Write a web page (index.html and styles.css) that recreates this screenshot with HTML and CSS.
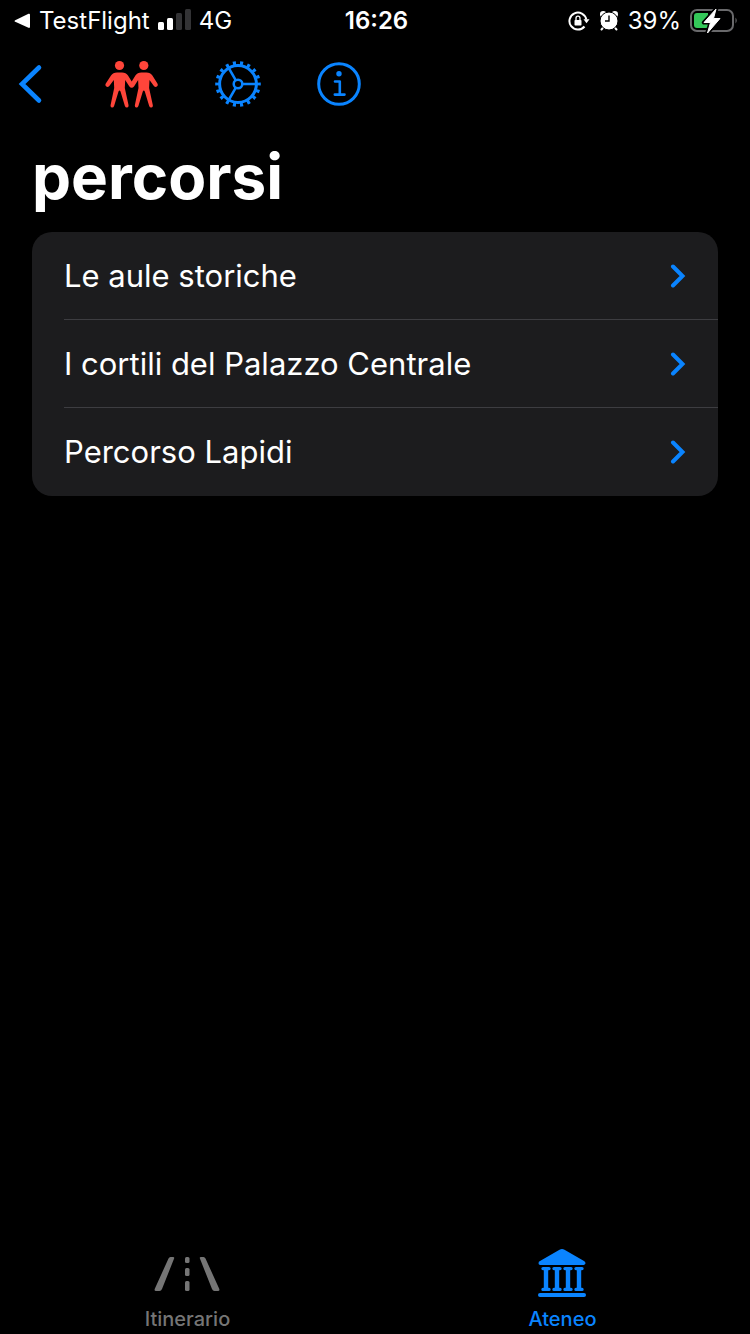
FILE: index.html
```html
<!DOCTYPE html>
<html lang="it">
<head>
<meta charset="utf-8">
<meta name="viewport" content="width=device-width, initial-scale=1">
<title>percorsi</title>
<link rel="stylesheet" href="styles.css">
</head>
<body>
<div class="app">
  <header class="status">
    <div class="status-side">
      <a class="status-back" href="#">
        <svg width="16" height="16" viewBox="0 0 16 16" fill="currentColor" aria-hidden="true"><path d="M14.500 .8Q16 .2 16 1.800V13.800Q16 15.400 14.500 14.800L1.200 8.800Q-.2 8 1.200 7.200Z"/></svg>
        <span>TestFlight</span>
      </a>
      <svg class="signal" width="33" height="22" viewBox="0 0 33 22" fill="#fff" aria-hidden="true">
        <rect x="0" y="13" width="6" height="8" rx="1.500"/><rect x="9" y="9" width="6" height="12" rx="1.500"/>
        <g fill="#333335"><rect x="18" y="4" width="6" height="17" rx="1.500"/><rect x="27" y="0" width="6" height="21" rx="1.500"/></g>
      </svg>
      <span>4G</span>
    </div>
    <time class="clock">16:26</time>
    <div class="status-side status-end">
      <svg width="22" height="20" viewBox="0 0 22 20" fill="none" stroke="#fff" stroke-width="2" aria-hidden="true">
        <path d="M18.300 8.500A8.500 8.500 0 1 0 16.500 15.500"/><path d="M15.500 8.300H21.500L18.500 12.300Z" fill="#fff" stroke="none"/>
        <rect x="6.500" y="9" width="7" height="5.500" rx=".8" fill="#fff" stroke="none"/><path d="M8 9.500V7.200a2 2 0 0 1 4 0V9.500" stroke-width="1.300"/>
      </svg>
      <svg width="20" height="22" viewBox="0 0 20 22" aria-hidden="true">
        <circle cx="4.200" cy="4.200" r="3.200" fill="#fff"/><circle cx="15.800" cy="4.200" r="3.200" fill="#fff"/>
        <path d="M4.300 17.500L2.500 19.500M15.700 17.500l1.800 2" stroke="#fff" stroke-width="2" stroke-linecap="round"/>
        <circle cx="10" cy="11" r="9" fill="#fff" stroke="#000" stroke-width="1"/>
        <path d="M10 5.500V11H6" fill="none" stroke="#000" stroke-width="1.400"/>
      </svg>
      <span>39%</span>
      <svg class="battery" width="49" height="26" viewBox="0 0 49 26" aria-hidden="true">
        <rect x="1" y="2" width="42" height="21" rx="6" fill="none" stroke="#69696b" stroke-width="2"/>
        <path d="M45.500 9.500q2.500 3 0 6Z" fill="#69696b"/>
        <path d="M7 5H18V20H7Q4 20 4 17V8Q4 5 7 5Z" fill="#34c759"/>
        <path d="M26.500 .5L13.800 14.500H20.500L17 25.500 30.500 10.500H23.500Z" fill="#000" stroke="#000" stroke-width="4" stroke-linejoin="round"/>
        <path d="M26 1L14 14.500H20.500L17.500 25 30 10.500H23.500Z" fill="#fff" stroke="#fff" stroke-width="1" stroke-linejoin="round"/>
      </svg>
    </div>
  </header>

  <nav class="toolbar" aria-label="Strumenti">
    <button type="button" aria-label="Indietro">
      <svg width="26" height="42" viewBox="0 0 26 42" fill="none" stroke="currentColor" stroke-width="4.600" stroke-linecap="round" stroke-linejoin="miter"><path d="M21 4.500L4 21 21 37.500"/></svg>
    </button>
    <button type="button" class="people" aria-label="Accompagnatori">
      <svg width="54" height="50" viewBox="0 0 54 50" fill="currentColor">
        <circle cx="14.500" cy="6.500" r="4.600"/><circle cx="38.800" cy="6.500" r="4.600"/>
        <path d="M12 13.500h5q4 0 6 3l3.700 6 3.700-6q2-3 6-3h5q4 0 6 3l5 8q1 2-.5 3t-3-.5L44.500 21l-.4 8 3.700 17q.3 2.200-1.300 2.500t-2.300-1.500L39.800 32.500q-1-2-2 0L33.400 47q-.8 1.900-2.300 1.500t-1.200-2.500L33.500 29l-.4-8-3.900 6.200q-1.200 1.500-2.500 1.500t-2.500-1.500L20.200 21l-.4 8 3.700 17q.3 2.200-1.300 2.500t-2.300-1.500L15.500 32.500q-1-2-2 0L9.100 47q-.8 1.900-2.300 1.500t-1.200-2.500L9.200 29l-.4-8-4.500 6q-1.500 1.500-3 .5t-.5-3L6 16.500q2-3 6-3Z"/>
      </svg>
    </button>
    <button type="button" class="settings" aria-label="Impostazioni">
      <svg width="46" height="46" viewBox="0 0 46 46" fill="none" stroke="currentColor" stroke-width="2.500">
        <circle cx="23" cy="23" r="18.400" stroke-width="3"/><circle cx="23" cy="23" r="4.300"/>
        <circle cx="23" cy="23" r="20.800" stroke-width="4" pathLength="18" stroke-dasharray=".42 .58" stroke-dashoffset=".21"/>
        <path d="M27.500 23H41.500M20.700 19.100L13.700 7M20.700 26.900L13.700 39"/>
      </svg>
    </button>
    <button type="button" class="info" aria-label="Informazioni">
      <svg width="44" height="44" viewBox="0 0 44 44" fill="none" stroke="currentColor" stroke-width="2.600" stroke-linecap="round" stroke-linejoin="round">
        <circle cx="22" cy="22" r="20.300" stroke-width="3"/><circle cx="22" cy="11.800" r="2.700" fill="currentColor" stroke="none"/><path d="M18 19.500H22.800V32.600M17.800 32.600H27.500"/>
      </svg>
    </button>
  </nav>

  <main class="content">
    <h1>percorsi</h1>
    <ul class="list">
      <li><a href="#"><span>Le aule storiche</span><svg class="chevron" viewBox="0 0 16 24"><path d="M3 2.500L12.500 12 3 21.500"/></svg></a></li>
      <li><a href="#"><span>I cortili del Palazzo Centrale</span><svg class="chevron" viewBox="0 0 16 24"><path d="M3 2.500L12.500 12 3 21.500"/></svg></a></li>
      <li><a href="#"><span>Percorso Lapidi</span><svg class="chevron" viewBox="0 0 16 24"><path d="M3 2.500L12.500 12 3 21.500"/></svg></a></li>
    </ul>
  </main>

  <nav class="tabs" aria-label="Sezioni">
    <a class="tab" href="#">
      <svg width="68" height="52" viewBox="0 0 68 52" fill="currentColor" aria-hidden="true">
        <path d="M16.500 9H19Q20.800 9 20 10.800L8 41Q7.200 43 5.500 43H2Q0 43 .8 40.800L14.500 10.500Q15.200 9 16.500 9Z"/>
        <path d="M49.500 9H47Q45.200 9 46 10.800L58 41Q58.800 43 60.500 43H64Q66 43 65.200 40.800L51.500 10.500Q50.800 9 49.500 9Z"/>
        <rect x="31" y="9" width="4.500" height="6" rx="1.500"/><rect x="31" y="20" width="4.500" height="8" rx="1.500"/><rect x="31" y="33" width="4.500" height="10" rx="1.500"/>
      </svg>
      <span>Itinerario</span>
    </a>
    <a class="tab active" href="#" aria-current="page">
      <svg width="50" height="52" viewBox="1 0 50 52" fill="currentColor" aria-hidden="true">
        <path d="M22.500 1.800Q25 .4 27.500 1.800L47 13Q48.500 14 48.500 15.200T46.800 17H3.200Q1.500 17 1.500 15.200T3 13Z"/>
        <rect x="1" y="45" width="48" height="4" rx="2"/>
        <path d="M6 20.600H12M6 41.400H12M17 20.600h6M17 41.400h6M28 20.600h6M28 41.400h6M39 20.600h6M39 41.400h6" stroke="currentColor" stroke-width="3.400" stroke-linecap="round"/>
        <path d="M9 21V41M20 21V41M31 21V41M42 21V41" stroke="currentColor" stroke-width="4.400"/>
      </svg>
      <span>Ateneo</span>
    </a>
  </nav>
</div>
</body>
</html>
```

FILE: styles.css
```css
* { box-sizing: border-box; }
body {
  margin: 0;
  background: #000;
  color: #fff;
  font-family: Inter, "Liberation Sans", sans-serif;
}
a { color: inherit; text-decoration: none; }
svg { display: block; flex: none; }
.app {
  min-height: 100vh;
  display: flex;
  flex-direction: column;
}
.status {
  display: grid;
  grid-template-columns: 1fr auto 1fr;
  align-items: center;
  height: 40px;
  padding: 2px 11px 0 14px;
  font-size: 24px;
  line-height: 32px;
}
.status-side, .status-back { display: flex; align-items: center; }
.status-side { gap: 8px; }
.status-back { gap: 9px; }
.signal { margin-bottom: 2px; }
.status-end { justify-content: flex-end; gap: 9px; }
.clock { font-weight: 600; }
.toolbar {
  display: flex;
  align-items: center;
  height: 88px;
  padding: 0 18px;
}
.toolbar button {
  padding: 0;
  border: 0;
  background: none;
  color: #0a84ff;
}
.toolbar .people { margin-left: 61px; color: #ff453a; }
.toolbar .settings { margin-left: 56px; }
.toolbar .info { margin-left: 56px; }
.content { flex: 1; padding: 12px 32px 32px; }
h1 {
  margin: 0;
  font-size: 62px;
  line-height: 74px;
  font-weight: 700;
}
.list {
  margin: 18px 0 0;
  padding: 0;
  list-style: none;
  background: #1c1c1e;
  border-radius: 20px;
}
.list li { padding-left: 32px; }
.list a {
  display: flex;
  align-items: center;
  justify-content: space-between;
  height: 88px;
  padding-right: 32px;
  font-size: 31px;
  line-height: 39px;
  border-bottom: 1px solid #3d3d41;
}
.list li:last-child a { border-bottom-color: transparent; }
.chevron {
  width: 16px;
  height: 24px;
  fill: none;
  stroke: #0a84ff;
  stroke-width: 4;
  stroke-linecap: round;
}
.tabs {
  display: grid;
  grid-template-columns: 1fr 1fr;
  padding-bottom: 2px;
}
.tab {
  display: flex;
  flex-direction: column;
  align-items: center;
  gap: 6px;
  color: #757575;
  font-size: 20px;
  line-height: 26px;
  font-weight: 500;
}
.tab.active { color: #0a84ff; }
```
